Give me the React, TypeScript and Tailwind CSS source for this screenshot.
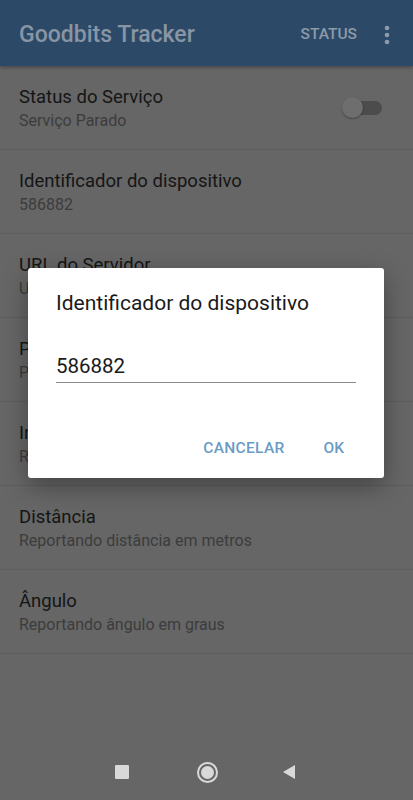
import React from "react";

const rows = [
  { title: "Identificador do dispositivo", sub: "586882" },
  { title: "URL do Servidor", sub: "URL do servidor de rastreamento" },
  { title: "Porta do Servidor", sub: "Porta do servidor" },
  { title: "Intervalo de frequência", sub: "Reportando intervalo em segundos" },
  { title: "Distância", sub: "Reportando distância em metros" },
  { title: "Ângulo", sub: "Reportando ângulo em graus" },
];

export default function App() {
  return (
    <div
      className="relative w-[413px] h-[800px] bg-[#666666] overflow-hidden flex flex-col"
      style={{ fontFamily: "Roboto, 'Noto Sans', sans-serif" }}
    >
      <header className="h-[66px] shrink-0 bg-[#2c4a67] flex items-center pl-[19px] pr-[23px] pt-[4px] shadow-[0_2px_3px_rgba(0,0,0,0.25)]">
        <h1 className="flex-1 text-[23px] font-medium text-[#8895a4]">Goodbits Tracker</h1>
        <span className="text-[15.5px] font-medium text-[#8e9aa8] mr-[27px]">STATUS</span>
        <svg width="6" height="20" viewBox="0 0 6 20" className="text-[#8e9aa8]">
          <circle cx="3" cy="3" r="2.3" fill="currentColor" />
          <circle cx="3" cy="10" r="2.3" fill="currentColor" />
          <circle cx="3" cy="17" r="2.3" fill="currentColor" />
        </svg>
      </header>

      <div className="flex flex-col">
        <div className="h-[84px] flex items-center pl-[19px] pr-[31px] border-b border-[#5d5d5d]">
          <div className="flex-1 flex flex-col pt-[2px]">
            <span className="text-[18.5px] leading-[24px] text-[#151515]">Status do Serviço</span>
            <span className="text-[16px] leading-[23px] text-[#3c3c3c]">Serviço Parado</span>
          </div>
          <div className="relative w-[40px] h-[22px] flex items-center">
            <div className="ml-[7px] w-[33px] h-[14px] rounded-full bg-[#4c4c4c]" />
            <div className="absolute left-0 top-0 w-[21px] h-[21px] rounded-full bg-[#6e6e6e] shadow-[0_1px_2px_rgba(0,0,0,0.35)]" />
          </div>
        </div>
        {rows.map((r) => (
          <div key={r.title} className="h-[84px] flex flex-col justify-center pl-[19px] pr-[20px] pt-[2px] border-b border-[#5d5d5d]">
            <span className="text-[18.5px] leading-[24px] text-[#151515]">{r.title}</span>
            <span className="text-[16px] leading-[23px] text-[#3c3c3c]">{r.sub}</span>
          </div>
        ))}
      </div>

      <div className="mt-auto h-[56px] flex items-center justify-center gap-[68px] pr-[3px]">
        <div className="w-[14px] h-[14px] bg-[#d9d9d9] rounded-[1px]" />
        <div className="w-[21px] h-[21px] rounded-full border-[2px] border-[#d9d9d9] flex items-center justify-center">
          <div className="w-[13px] h-[13px] rounded-full bg-[#d9d9d9]" />
        </div>
        <svg width="14" height="16" viewBox="0 0 14 16" className="-ml-[4px]">
          <path d="M13 1 L1 8 L13 15 Z" fill="#d9d9d9" />
        </svg>
      </div>

      <div className="absolute left-[28px] top-[268px] w-[356px] h-[210px] bg-white rounded-[3px] shadow-[0_8px_24px_rgba(0,0,0,0.35)] flex flex-col px-[28px] pt-[21px]">
        <h2 className="text-[21px] leading-[28px] text-[#1a1a1a]">Identificador do dispositivo</h2>
        <div className="mt-[35px] border-b border-[#8a8a8a] pb-[2px]">
          <span className="block text-[20.5px] leading-[28px] text-[#1a1a1a]">586882</span>
        </div>
        <div className="mt-auto mb-[18px] flex justify-end items-center gap-[39px] pr-[12px]">
          <span className="text-[15.5px] font-medium text-[#6a9bc4] tracking-[0.3px]">CANCELAR</span>
          <span className="text-[15.5px] font-medium text-[#6a9bc4]">OK</span>
        </div>
      </div>
    </div>
  );
}
